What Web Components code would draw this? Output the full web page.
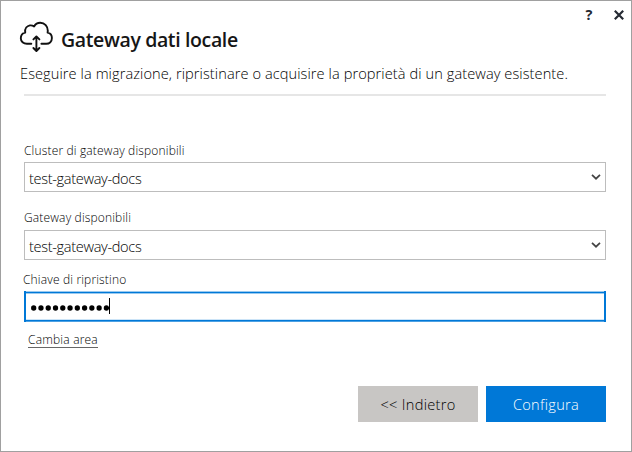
<!DOCTYPE html>
<html lang="it">
<head>
<meta charset="utf-8">
<title>Gateway dati locale</title>
<style>
html, body { margin: 0; height: 100%; background: #fff; }
body { font-family: "Open Sans", "Noto Sans", sans-serif; overflow: hidden; }
</style>
</head>
<body>
<gateway-dialog></gateway-dialog>
<script>
const define = (name, html) => customElements.define(name, class extends HTMLElement {
  constructor() {
    super();
    const t = document.createElement('template');
    t.innerHTML = html;
    this.attachShadow({ mode: 'open' }).append(t.content.cloneNode(true));
  }
});

define('cloud-icon', `
<style>:host { display: block; width: 36px; height: 34px; } svg { display: block; }</style>
<svg width="36" height="34" viewBox="0 0 36 34" fill="none" stroke="#111" stroke-width="1.9" stroke-linecap="round" stroke-linejoin="round">
  <path d="M12.3 22.8H8C4.4 22.8 1.8 20.4 1.8 17.3C1.8 14.5 3.6 12.2 6.2 11.6C5.6 7.5 8 4.9 10.9 4.4C12.7 4.2 14 4.7 15.1 5.5C16.5 3 18.6 1.8 21.2 1.8C25.7 1.8 28.9 5.1 28.8 9.8L28.6 11.6C31.2 12.1 32.9 14.3 32.9 17.1C32.9 20.5 30.5 22.8 27.2 22.8H22.4"/>
  <path d="M17.4 16V29.6M14.4 18.4L17.4 15.4L20.4 18.4M14.4 27L17.4 30L20.4 27"/>
</svg>`);

define('window-controls', `
<style>
:host { display: flex; justify-content: flex-end; align-items: center; gap: 21px; height: 20px; padding: 8px 7px 0 0; box-sizing: border-box; color: #252a33; }
span { font: 700 14.5px/18px "Open Sans", sans-serif; width: 8px; text-align: center; }
svg { display: block; }
</style>
<span>?</span>
<svg width="10" height="10" viewBox="0 0 10 10" fill="none" stroke="#252a33" stroke-width="2.2"><path d="M.8.8L9.2 9.2M9.2.8L.8 9.2"/></svg>`);

define('dialog-header', `
<style>
:host { display: block; height: 76px; }
.brand { display: flex; height: 34px; gap: 6px; padding-left: 18px; }
.title { font: 600 19.5px/38px "Open Sans", sans-serif; letter-spacing: -.37px; color: #161616; white-space: nowrap; }
.sub { font: 300 14.6px/20px "Open Sans", sans-serif; letter-spacing: .08px; color: #000; padding: 8px 0 0 19px; white-space: nowrap; }
.rule { height: 2px; margin: 11px 25px 0 23px; background: #e6e6e6; }
</style>
<div class="brand"><cloud-icon></cloud-icon><div class="title"><slot name="title"></slot></div></div>
<div class="sub"><slot name="subtitle"></slot></div>
<div class="rule"></div>`);

define('form-field', `
<style>
:host { display: block; }
.label { font: 300 12px/16px "Open Sans", sans-serif; color: #000; white-space: nowrap; height: 19px; letter-spacing: .16px; margin-left: var(--label-x, 0); }
</style>
<div class="label"><slot name="label"></slot></div><slot></slot>`);

define('select-box', `
<style>
:host { display: flex; align-items: center; justify-content: space-between; box-sizing: border-box; height: 30px; border: 1px solid #bdbdbd; padding: 0 4px 0 4px; background: #fff; }
.v { font: 300 14.6px/20px "Open Sans", sans-serif; letter-spacing: -.34px; color: #000; padding-top: var(--value-pad, 2px); }
svg { display: block; }
</style>
<span class="v"><slot></slot></span>
<svg width="10" height="8" viewBox="0 0 10 8" fill="none" stroke="#444" stroke-width="1.7"><path d="M1 1.8L5 5.7L9 1.8"/></svg>`);

customElements.define('secret-field', class extends HTMLElement {
  constructor() {
    super();
    const dots = Array.from({ length: 11 }, (_, i) => `<circle cx="${2.7 + i * 7.27}" cy="4" r="2.65"/>`).join('');
    this.attachShadow({ mode: 'open' }).innerHTML = `
<style>
:host { display: flex; align-items: center; box-sizing: border-box; height: 31px; border: solid #0078d7; border-width: 0 2px; padding-left: 5px;
  background: linear-gradient(#99c9ef 0 1px, #0078d7 1px 2px, #99c9ef 2px 3px, #fff 3px 28px, #cce4f7 28px 29px, #0078d7 29px 30px, #4da1e3 30px 31px); }
svg { display: block; margin-top: 3px; }
.caret { width: 1px; height: 16px; background: #000; margin-top: -1px; }
</style>
<svg width="78" height="8" viewBox="0 0 78 8">${dots}</svg><div class="caret"></div>`;
  }
});

define('text-link', `
<style>
:host { display: block; height: 14px; }
span { display: block; width: max-content; font: 300 12px/14px "Open Sans", sans-serif; letter-spacing: .2px; color: #000; border-bottom: 1px solid #666; white-space: nowrap; }
</style>
<span><slot></slot></span>`);

define('action-button', `
<style>
:host { display: flex; align-items: center; justify-content: center; width: 120px; height: 36px; background: var(--bg); color: var(--fg); font: 300 14.6px/20px "Open Sans", sans-serif; letter-spacing: .3px; white-space: pre; }
</style>
<slot></slot>`);

define('gateway-dialog', `
<style>
:host { display: block; box-sizing: border-box; width: 632px; height: 452px; border: 1px solid #a0a0a0; background: #fff; }
.form { display: flex; flex-direction: column; padding: 46px 25px 0 23px; }
form-field + form-field { margin-top: 18px; --value-pad: 1px; }
form-field + form-field select-box { margin-top: 1px; }
form-field.key { margin-top: 12px; --label-x: -1px; }
text-link { margin: 11px 0 0 4px; }
.actions { display: flex; justify-content: flex-end; gap: 8px; padding: 39px 25px 0 0; }
</style>
<window-controls></window-controls>
<dialog-header>
  <span slot="title">Gateway dati locale</span>
  <span slot="subtitle">Eseguire la migrazione, ripristinare o acquisire la proprietà di un gateway esistente.</span>
</dialog-header>
<div class="form">
  <form-field><span slot="label">Cluster di gateway disponibili</span><select-box>test-gateway-docs</select-box></form-field>
  <form-field><span slot="label">Gateway disponibili</span><select-box>test-gateway-docs</select-box></form-field>
  <form-field class="key"><span slot="label">Chiave di ripristino</span><secret-field></secret-field></form-field>
  <text-link>Cambia area</text-link>
</div>
<div class="actions">
  <action-button style="--bg:#c8c6c4;--fg:#000">&lt;&lt; Indietro</action-button>
  <action-button style="--bg:#0078d7;--fg:#fff">Configura</action-button>
</div>`);
</script>
</body>
</html>
